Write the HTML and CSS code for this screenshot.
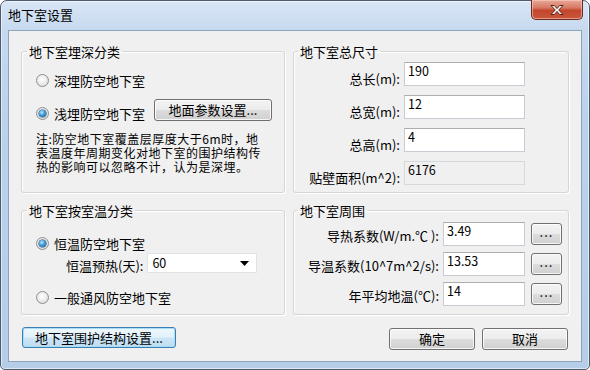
FILE: index.html
```html
<!DOCTYPE html>
<html lang="zh">
<head>
<meta charset="utf-8">
<title>地下室设置</title>
<link rel="stylesheet" href="styles.css">
</head>
<body>
<div class="window">
  <div class="titlebar">
    <span class="title">地下室设置</span>
    <button class="close" aria-label="关闭">
      <svg width="14" height="12" viewBox="0 0 14 12"><path d="M1 1.5h3.3L7 4.6 9.7 1.5H13L8.7 6 13 10.5H9.7L7 7.4 4.3 10.5H1L5.3 6z" fill="#fff" stroke="#5a1f14" stroke-width="1" stroke-linejoin="round"/></svg>
    </button>
  </div>
  <div class="client">
    <div class="groups">
      <fieldset class="group depth">
        <legend>地下室埋深分类</legend>
        <label class="radio-row first"><span class="radio"></span>深埋防空地下室</label>
        <div class="radio-btn-row">
          <label class="radio-row"><span class="radio checked"></span>浅埋防空地下室</label>
          <button class="btn param">地面参数设置...</button>
        </div>
        <p class="note">注:防空地下室覆盖层厚度大于6m时，地<br>表温度年周期变化对地下室的围护结构传<br>热的影响可以忽略不计，认为是深埋。</p>
      </fieldset>
      <fieldset class="group size">
        <legend>地下室总尺寸</legend>
        <div class="form size-form">
          <span class="lbl">总长(m):</span><span class="input">190</span>
          <span class="lbl">总宽(m):</span><span class="input">12</span>
          <span class="lbl">总高(m):</span><span class="input">4</span>
          <span class="lbl">贴壁面积(m^2):</span><span class="input disabled">6176</span>
        </div>
      </fieldset>
      <fieldset class="group temp">
        <legend>地下室按室温分类</legend>
        <label class="radio-row first"><span class="radio checked"></span>恒温防空地下室</label>
        <div class="preheat">
          <span class="lbl">恒温预热(天):</span>
          <span class="select">60<svg width="9" height="5" viewBox="0 0 9 5"><path d="M0 0h9L4.5 5z" fill="#000"/></svg></span>
        </div>
        <label class="radio-row"><span class="radio"></span>一般通风防空地下室</label>
      </fieldset>
      <fieldset class="group around">
        <legend>地下室周围</legend>
        <div class="form around-form">
          <span class="lbl">导热系数(W/m.℃ ):</span><span class="input">3.49</span><button class="btn dots">...</button>
          <span class="lbl">导温系数(10^7m^2/s):</span><span class="input">13.53</span><button class="btn dots">...</button>
          <span class="lbl">年平均地温(℃):</span><span class="input">14</span><button class="btn dots">...</button>
        </div>
      </fieldset>
    </div>
    <div class="footer">
      <button class="btn focus wide">地下室围护结构设置...</button>
      <div class="actions">
        <button class="btn action">确定</button>
        <button class="btn action">取消</button>
      </div>
    </div>
  </div>
</div>
</body>
</html>
```

FILE: styles.css
```css
* { box-sizing: border-box; }
html, body { margin: 0; padding: 0; background: #ffffff; }
body {
  font-family: "Noto Sans CJK SC", "Noto Sans", sans-serif;
  font-size: 13px;
  color: #000;
  width: 590px;
  height: 370px;
  overflow: hidden;
}
.window {
  width: 590px;
  height: 370px;
  border: 1px solid #4d5b6e;
  border-radius: 7px 7px 5px 5px;
  background: linear-gradient(180deg, #d8e6f6 0px, #c6d9ef 30px, #bbd2eb 120px, #b6cde8 370px);
  display: flex;
  flex-direction: column;
  box-shadow: inset 0 0 0 1px rgba(255,255,255,0.55);
}
.titlebar {
  height: 29px;
  flex: none;
  display: flex;
  align-items: flex-start;
  justify-content: space-between;
  padding-left: 7px;
  padding-right: 6px;
}
.title {
  margin-top: 6px;
  line-height: 16px;
  font-size: 13px;
}
.close {
  width: 52px;
  height: 20px;
  margin-top: -1px;
  border: 1px solid #6b2a1e;
  border-top: none;
  border-radius: 0 0 5px 5px;
  background: linear-gradient(180deg, #e9a99a 0%, #d77a66 40%, #c4452c 55%, #c8583c 100%);
  box-shadow: inset 0 0 0 1px rgba(255,210,200,0.55);
  display: flex;
  align-items: center;
  justify-content: center;
  padding: 0;
}
.client {
  flex: 1;
  margin: 0 7px 7px 7px;
  background: #f0f0f0;
  border: 1px solid #8ea4be;
  padding: 13px 12px 0 12px;
}
.groups {
  display: grid;
  grid-template-columns: 264px 276px;
  grid-template-rows: 149px 112px;
  column-gap: 8px;
  row-gap: 10px;
}
.group {
  margin: 0;
  padding: 0;
  min-width: 0;
  border: 1px solid #d5d5d5;
  border-radius: 3px;
  box-shadow: inset 1px 1px 0 #fff, 1px 1px 0 #fff;
  display: flex;
  flex-direction: column;
}
.group legend {
  margin-left: 0;
  padding: 0 2px;
  line-height: 15px;
  font-size: 13px;
}
.depth, .temp { padding-left: 14px; }
.depth legend, .temp legend { margin-left: -9px; }
.radio-row {
  display: flex;
  align-items: center;
  gap: 5px;
  line-height: 15px;
  height: 15px;
}
.radio {
  width: 13px;
  height: 13px;
  border-radius: 50%;
  border: 1px solid #8d8f93;
  background: radial-gradient(circle at 45% 40%, #ffffff 0%, #f0f0f0 40%, #cfd0d2 100%);
  display: flex;
  align-items: center;
  justify-content: center;
  flex: none;
}
.radio.checked::after {
  content: "";
  width: 7px;
  height: 7px;
  border-radius: 50%;
  background: radial-gradient(circle at 40% 35%, #bfeaff 0%, #3d9ad8 45%, #134f8e 100%);
  box-shadow: 0 0 0 0.5px #0e3f72;
}
.depth .radio-row.first { margin-top: 14px; }
.radio-btn-row {
  display: flex;
  align-items: flex-end;
  margin-top: 11px;
  height: 22px;
}
.param {
  margin-left: 9px;
  width: 118px;
  height: 22px;
}
.note {
  margin: 11px 0 0 0;
  line-height: 14px;
  font-size: 12px;
  letter-spacing: 0.5px;
  white-space: nowrap;
}
.btn {
  font-family: inherit;
  font-size: 13px;
  color: #000;
  border: 1px solid #707070;
  border-radius: 3px;
  background: linear-gradient(180deg, #f3f3f3 0%, #ececec 48%, #dcdcdc 52%, #d0d0d0 100%);
  box-shadow: inset 0 0 0 1px rgba(255,255,255,0.8);
  padding: 0;
  line-height: 18px;
  display: flex;
  align-items: center;
  justify-content: center;
}
.btn.focus {
  border-color: #3c7fb1;
  background: linear-gradient(180deg, #eef7fd 0%, #e3f1fb 48%, #cde6f6 52%, #bedcf0 100%);
  box-shadow: inset 0 0 0 1px #a9dcf6;
}
.size { padding: 3px 43px 0 4px; }
.form {
  display: grid;
  column-gap: 4px;
}
.size-form {
  grid-template-columns: 1fr 121px;
  grid-auto-rows: 24px;
  row-gap: 9px;
  align-items: end;
}
.lbl {
  text-align: right;
  white-space: nowrap;
  line-height: 15px;
}
.input {
  height: 24px;
  background: #fff;
  border: 1px solid #c8ccd2;
  border-top-color: #abadb3;
  padding: 0 0 0 3px;
  line-height: 16px;
  font-size: 12.5px;
}
.input.disabled { background: #f0f0f0; border-color: #d6d8dc; }
.temp .radio-row.first { margin-top: 18px; }
.preheat {
  display: flex;
  align-items: flex-end;
  margin-top: 2px;
  margin-left: 30px;
  gap: 4px;
}
.select {
  width: 110px;
  height: 20px;
  background: #fff;
  border: 1px solid #dfe3e8;
  padding: 0 7px 0 4px;
  display: flex;
  align-items: center;
  justify-content: space-between;
  line-height: 16px;
  font-size: 12.5px;
}
.temp .radio-row:last-child { margin-top: 17px; }
.around { padding: 4px 6px 0 4px; }
.around-form {
  grid-template-columns: 1fr 82px 31px;
  grid-auto-rows: 24px;
  row-gap: 6px;
  column-gap: 6px;
  align-items: center;
}
.around-form .lbl { margin-right: -2px; padding-top: 3px; }
.dots {
  height: 22px;
  line-height: 14px;
  letter-spacing: 1px;
  padding-bottom: 4px;
}
.footer {
  display: flex;
  justify-content: space-between;
  align-items: flex-start;
  margin-top: 12px;
  padding: 0 1px;
}
.wide { width: 154px; height: 21px; }
.actions {
  display: flex;
  gap: 7px;
  margin-top: 1px;
}
.action { width: 86px; height: 22px; }
```
